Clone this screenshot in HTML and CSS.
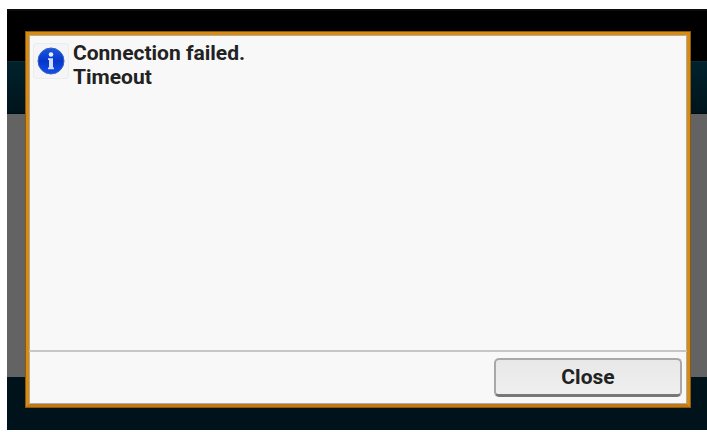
FILE: index.html
```
<!DOCTYPE html>
<html lang="en">
<head>
  <meta charset="UTF-8" />
  <meta name="viewport" content="width=device-width, initial-scale=1.0" />
  <title>Connection failed</title>
  <link rel="stylesheet" href="styles.css">
</head>
<body>
  <main class="screen">
    <div class="backdrop" aria-hidden="true">
      <div class="status-bar"></div>
      <div class="title-bar"></div>
      <div class="content-area"></div>
      <div class="bottom-bar"></div>
    </div>

    <section class="dialog" role="alertdialog" aria-labelledby="message">
      <div class="dialog-body">
        <span class="info-icon">
          <svg viewBox="0 0 28 28" width="28" height="28" aria-hidden="true">
            <defs>
              <linearGradient id="infoFill" x1="0" y1="0" x2="0" y2="1">
                <stop offset="0" stop-color="#1c58e0" />
                <stop offset="0.5" stop-color="#0636cc" />
                <stop offset="1" stop-color="#1450e6" />
              </linearGradient>
            </defs>
            <circle cx="14" cy="14" r="13" fill="url(#infoFill)" stroke="#3a62c4" />
            <circle cx="14" cy="7.5" r="2.3" fill="#e8efff" />
            <path d="M11 11.2h5v9.3h1v1.8h-6v-1.8h1v-7.4h-1z" fill="#d2deff" />
          </svg>
        </span>
        <p id="message">Connection failed.<br>Timeout</p>
      </div>
      <footer class="dialog-footer">
        <button type="button" class="close-button">Close</button>
      </footer>
    </section>
  </main>
</body>
</html>
```
FILE: styles.css
```
:root {
  --accent: #d98a10;
  --accent-dark: #bf7a12;
  --dialog-bg: #f8f8f8;
  --text-color: #222;
}
* {
  box-sizing: border-box;
  margin: 0;
  padding: 0;
}
body {
  background-color: #fff;
  color: var(--text-color);
  font-family: Roboto, "Liberation Sans", sans-serif;
  font-size: 21px;
  font-weight: bold;
  line-height: 24px;
  padding: 9px 0 2px 7px;
}
/* backdrop and dialog share one grid cell */
.screen {
  display: grid;
}
.backdrop,
.dialog {
  grid-area: 1 / 1;
}
.backdrop {
  display: flex;
  flex-direction: column;
}
.status-bar {
  height: 52px;
  background-color: #000;
  border-top: 2px solid #0c0c0c;
}
.title-bar {
  height: 53px;
  background: linear-gradient(#00222d, #00141c);
  border-top: 1px solid #0a2c35;
  border-bottom: 1px solid #000c12;
}
.content-area {
  flex: 1;
  background-color: #636363;
}
.bottom-bar {
  height: 53px;
  background-color: #00131b;
}
.dialog {
  display: flex;
  flex-direction: column;
  margin: 22px 16px 22px 18px;
  background-color: var(--dialog-bg);
  border: 4px solid var(--accent);
  border-bottom-color: var(--accent-dark);
  outline: 1px solid #8a5810;
  outline-offset: -1px;
  box-shadow: inset 0 0 0 1px #b5aca0;
}
.dialog-body {
  display: flex;
  align-items: flex-start;
  gap: 4px;
  min-height: 315px;
  padding: 6px 4px;
}
.info-icon {
  display: flex;
  padding: 3px;
  margin-top: 2px;
  background-color: #f5f5f7;
  border: 1px solid #ececef;
  border-radius: 3px;
}
.dialog-footer {
  display: flex;
  justify-content: flex-end;
  padding: 6px 5px 7px;
  border-top: 2px solid #c6c6c6;
}
.close-button {
  width: 188px;
  height: 39px;
  font: inherit;
  color: var(--text-color);
  background: linear-gradient(#e8e8e8, #efefef);
  border: 2px solid #a8a8a8;
  border-bottom: 3px solid #777;
  border-radius: 5px;
  cursor: pointer;
}
```
